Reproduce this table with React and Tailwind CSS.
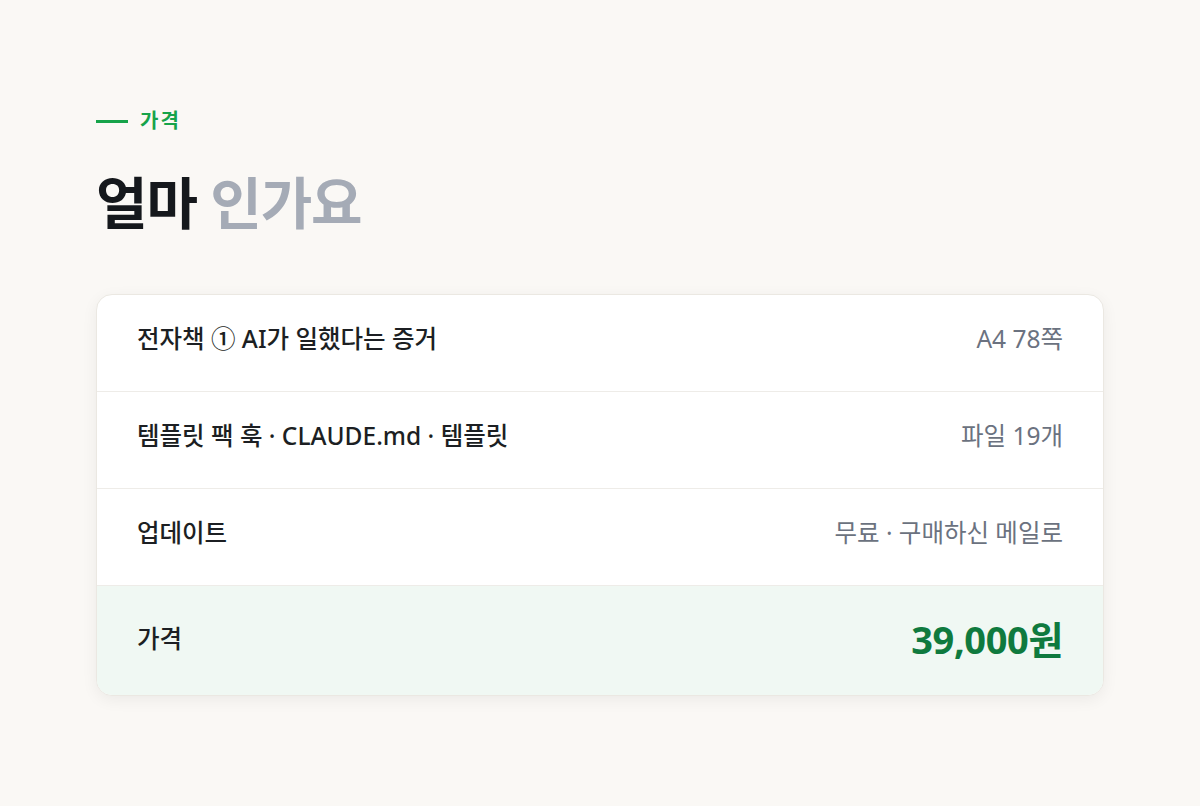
export default function App() {
  const rows = [
    { label: '전자책 ① AI가 일했다는 증거', value: 'A4 78쪽' },
    { label: '템플릿 팩 훅 · CLAUDE.md · 템플릿', value: '파일 19개' },
    { label: '업데이트', value: '무료 · 구매하신 메일로' },
  ];
  return (
    <div className="min-h-[806px] bg-[#faf8f5] px-24 pt-[109px] font-['Noto_Sans','Noto_Sans_CJK_KR',sans-serif]">
      <div className="flex items-center gap-3">
        <span className="h-[3px] w-8 bg-[#16a34a]" />
        <span className="text-[20px] font-semibold leading-6 tracking-[0.1em] text-[#16a34a]">가격</span>
      </div>

      <h1 className="mt-[35px] text-[56px] font-bold leading-[68px] tracking-[-0.02em] text-[#15181c]">
        얼마 <span className="text-[#a5abb6]">인가요</span>
      </h1>

      <div className="mt-[58px] overflow-hidden rounded-2xl border border-[#ebe8e2] bg-white shadow-[0_4px_16px_rgba(0,0,0,0.06)]">
        {rows.map((r) => (
          <div key={r.label} className="flex h-[97px] items-center justify-between border-b border-[#eeece8] px-10 pb-2">
            <span className="text-[24.5px] font-medium text-[#1c1f23]">{r.label}</span>
            <span className="text-[24.5px] text-[#6b7280]">{r.value}</span>
          </div>
        ))}
        <div className="flex h-[109px] items-center justify-between bg-[#f0f8f3] px-10 pb-0.5">
          <span className="text-[24.5px] font-medium text-[#1c1f23]">가격</span>
          <span className="text-[38px] font-bold tracking-[-0.01em] text-[#0f7a3e]">39,000원</span>
        </div>
      </div>
    </div>
  );
}
